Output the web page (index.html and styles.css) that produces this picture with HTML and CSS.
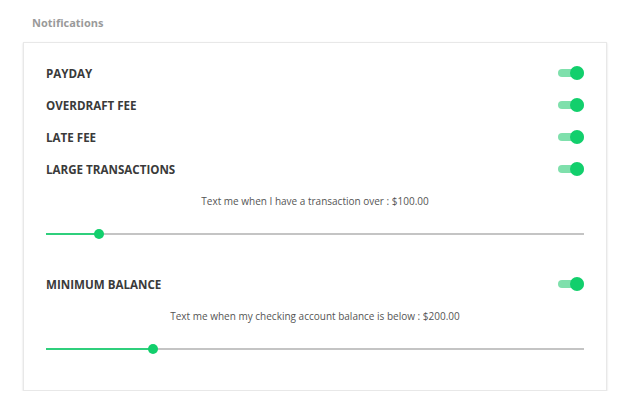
FILE: index.html
```html
<!DOCTYPE html>
<html lang="en">
<head>
    <meta charset="UTF-8">
    <title>Notifications</title>
    <link rel="stylesheet" href="styles.css">
</head>
<body>
    <div class="page">
        <h2 class="section-title">Notifications</h2>

        <div class="card">
            <div class="row">
                <span class="label">PAYDAY</span>
                <span class="toggle on"></span>
            </div>
            <div class="row">
                <span class="label">OVERDRAFT FEE</span>
                <span class="toggle on"></span>
            </div>
            <div class="row">
                <span class="label">LATE FEE</span>
                <span class="toggle on"></span>
            </div>
            <div class="row">
                <span class="label">LARGE TRANSACTIONS</span>
                <span class="toggle on"></span>
            </div>
            <p class="hint">Text me when I have a transaction over : $100.00</p>
            <div class="slider">
                <div class="slider-fill" style="width: 9.9%"></div>
                <div class="slider-knob" style="left: 9.9%"></div>
            </div>

            <div class="row row-gap">
                <span class="label">MINIMUM BALANCE</span>
                <span class="toggle on"></span>
            </div>
            <p class="hint">Text me when my checking account balance is below : $200.00</p>
            <div class="slider">
                <div class="slider-fill" style="width: 19.9%"></div>
                <div class="slider-knob" style="left: 19.9%"></div>
            </div>
        </div>
    </div>
</body>
</html>
```

FILE: styles.css
```css
* {
    margin: 0;
    padding: 0;
    box-sizing: border-box;
}

body {
    background: #ffffff;
    font-family: 'Open Sans', 'Liberation Sans', sans-serif;
    color: #333333;
}

.page {
    padding: 15px 13px 0 23px;
}

.section-title {
    font-size: 11px;
    font-weight: 700;
    color: #9a9a9a;
    line-height: 16px;
    padding-left: 9px;
    margin-bottom: 11px;
}

.card {
    width: 584px;
    height: 349px;
    border: 1px solid #e8e8e8;
    box-shadow: 0 1px 2px rgba(0, 0, 0, 0.14);
    padding: 14px 22px 0 22px;
}

.row {
    display: flex;
    align-items: center;
    justify-content: space-between;
    height: 32px;
}

.row-gap {
    margin-top: 24px;
}

.label {
    font-size: 11.6px;
    font-weight: 700;
    color: #3a3a3a;
}

.toggle {
    position: relative;
    width: 26px;
    height: 8px;
    border-radius: 4px;
    background: #7fe0ac;
}

.toggle.on::after {
    content: '';
    position: absolute;
    right: 0;
    top: -3px;
    width: 14px;
    height: 14px;
    border-radius: 50%;
    background: #12cf6c;
}

.hint {
    text-align: center;
    font-size: 10px;
    line-height: 14px;
    color: #555555;
    margin-top: 9px;
}

.slider {
    position: relative;
    height: 20px;
    margin-top: 16px;
}

.slider::before {
    content: '';
    position: absolute;
    left: 0;
    right: 0;
    top: 9px;
    height: 2px;
    background: #c4c4c4;
}

.slider-fill {
    position: absolute;
    left: 0;
    top: 9px;
    height: 2px;
    background: #2fcf7c;
}

.slider-knob {
    position: absolute;
    top: 5px;
    width: 10px;
    height: 10px;
    margin-left: -5px;
    border-radius: 50%;
    background: #12cf6c;
}
```
